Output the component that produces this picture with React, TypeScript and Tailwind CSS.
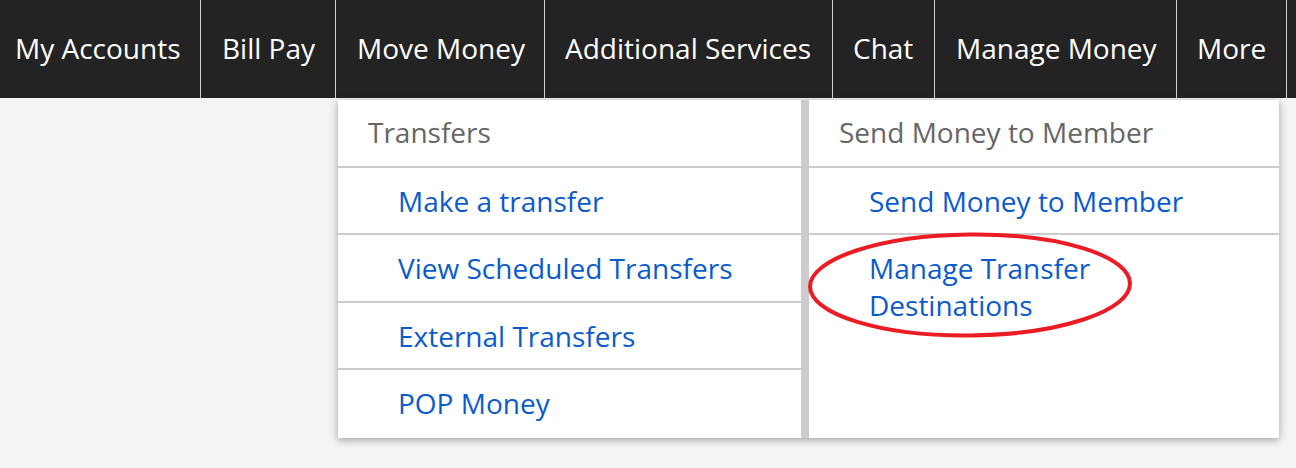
import React from "react";

const navItems: { label: string; w: string; pl: string }[] = [
  { label: "My Accounts", w: "w-[200px]", pl: "pl-[15px]" },
  { label: "Bill Pay", w: "w-[134px]", pl: "pl-[21px]" },
  { label: "Move Money", w: "w-[208px]", pl: "pl-[21px]" },
  { label: "Additional Services", w: "w-[287px]", pl: "pl-[20px]" },
  { label: "Chat", w: "w-[101px]", pl: "pl-[20px]" },
  { label: "Manage Money", w: "w-[241px]", pl: "pl-[21px]" },
  { label: "More", w: "w-[109px]", pl: "pl-[20px]" },
];

function Header({ children, pl }: { children: React.ReactNode; pl: string }) {
  return (
    <div
      className={`h-[67.6px] box-border border-b-2 border-[#cccccc] flex items-center ${pl} text-[#666666] text-[28px] leading-[37px]`}
    >
      {children}
    </div>
  );
}

function Link({
  children,
  pl,
  last,
}: {
  children: React.ReactNode;
  pl: string;
  last?: boolean;
}) {
  return (
    <div
      className={`min-h-[67.6px] box-border ${
        last ? "" : "border-b-2 border-[#cccccc]"
      } pt-[15px] pb-[13px] ${pl} text-[#0b5bcc] text-[28px] leading-[37px]`}
    >
      {children}
    </div>
  );
}

export default function App() {
  return (
    <div
      className="relative h-[468px] w-[1296px] overflow-hidden bg-[#f3f4f6]"
      style={{ fontFamily: '"Open Sans", "Noto Sans", sans-serif' }}
    >
      <nav className="flex h-[98px] bg-[#232323] text-white">
        {navItems.map((it) => (
          <React.Fragment key={it.label}>
            <div
              className={`${it.w} ${it.pl} flex items-center pb-[2px] text-[28px] whitespace-nowrap`}
            >
              {it.label}
            </div>
            <div className="w-px bg-[#cfcfcf]" />
          </React.Fragment>
        ))}
      </nav>

      <div className="absolute left-[338px] top-[100px] w-[941px] flex gap-[8px] bg-[#cccccc] shadow-[0_2px_8px_rgba(0,0,0,0.35)]">
        <div className="w-[463px] bg-white flex flex-col">
          <Header pl="pl-[30px]">Transfers</Header>
          <Link pl="pl-[60px]">Make a transfer</Link>
          <Link pl="pl-[60px]">View Scheduled Transfers</Link>
          <Link pl="pl-[60px]">External Transfers</Link>
          <Link pl="pl-[60px]" last>
            POP Money
          </Link>
        </div>
        <div className="w-[470px] bg-white flex flex-col">
          <Header pl="pl-[30px]">Send Money to Member</Header>
          <Link pl="pl-[60px]">Send Money to Member</Link>
          <Link pl="pl-[60px]" last>
            Manage Transfer
            <br />
            Destinations
          </Link>
        </div>
      </div>

      <svg
        className="absolute left-[805px] top-[229px] pointer-events-none"
        width="332"
        height="112"
        viewBox="0 0 332 112"
      >
        <ellipse
          cx="165"
          cy="56"
          rx="160"
          ry="50.5"
          fill="none"
          stroke="#ec1c24"
          strokeWidth="4"
          transform="rotate(-0.6 165 56)"
        />
      </svg>
    </div>
  );
}
